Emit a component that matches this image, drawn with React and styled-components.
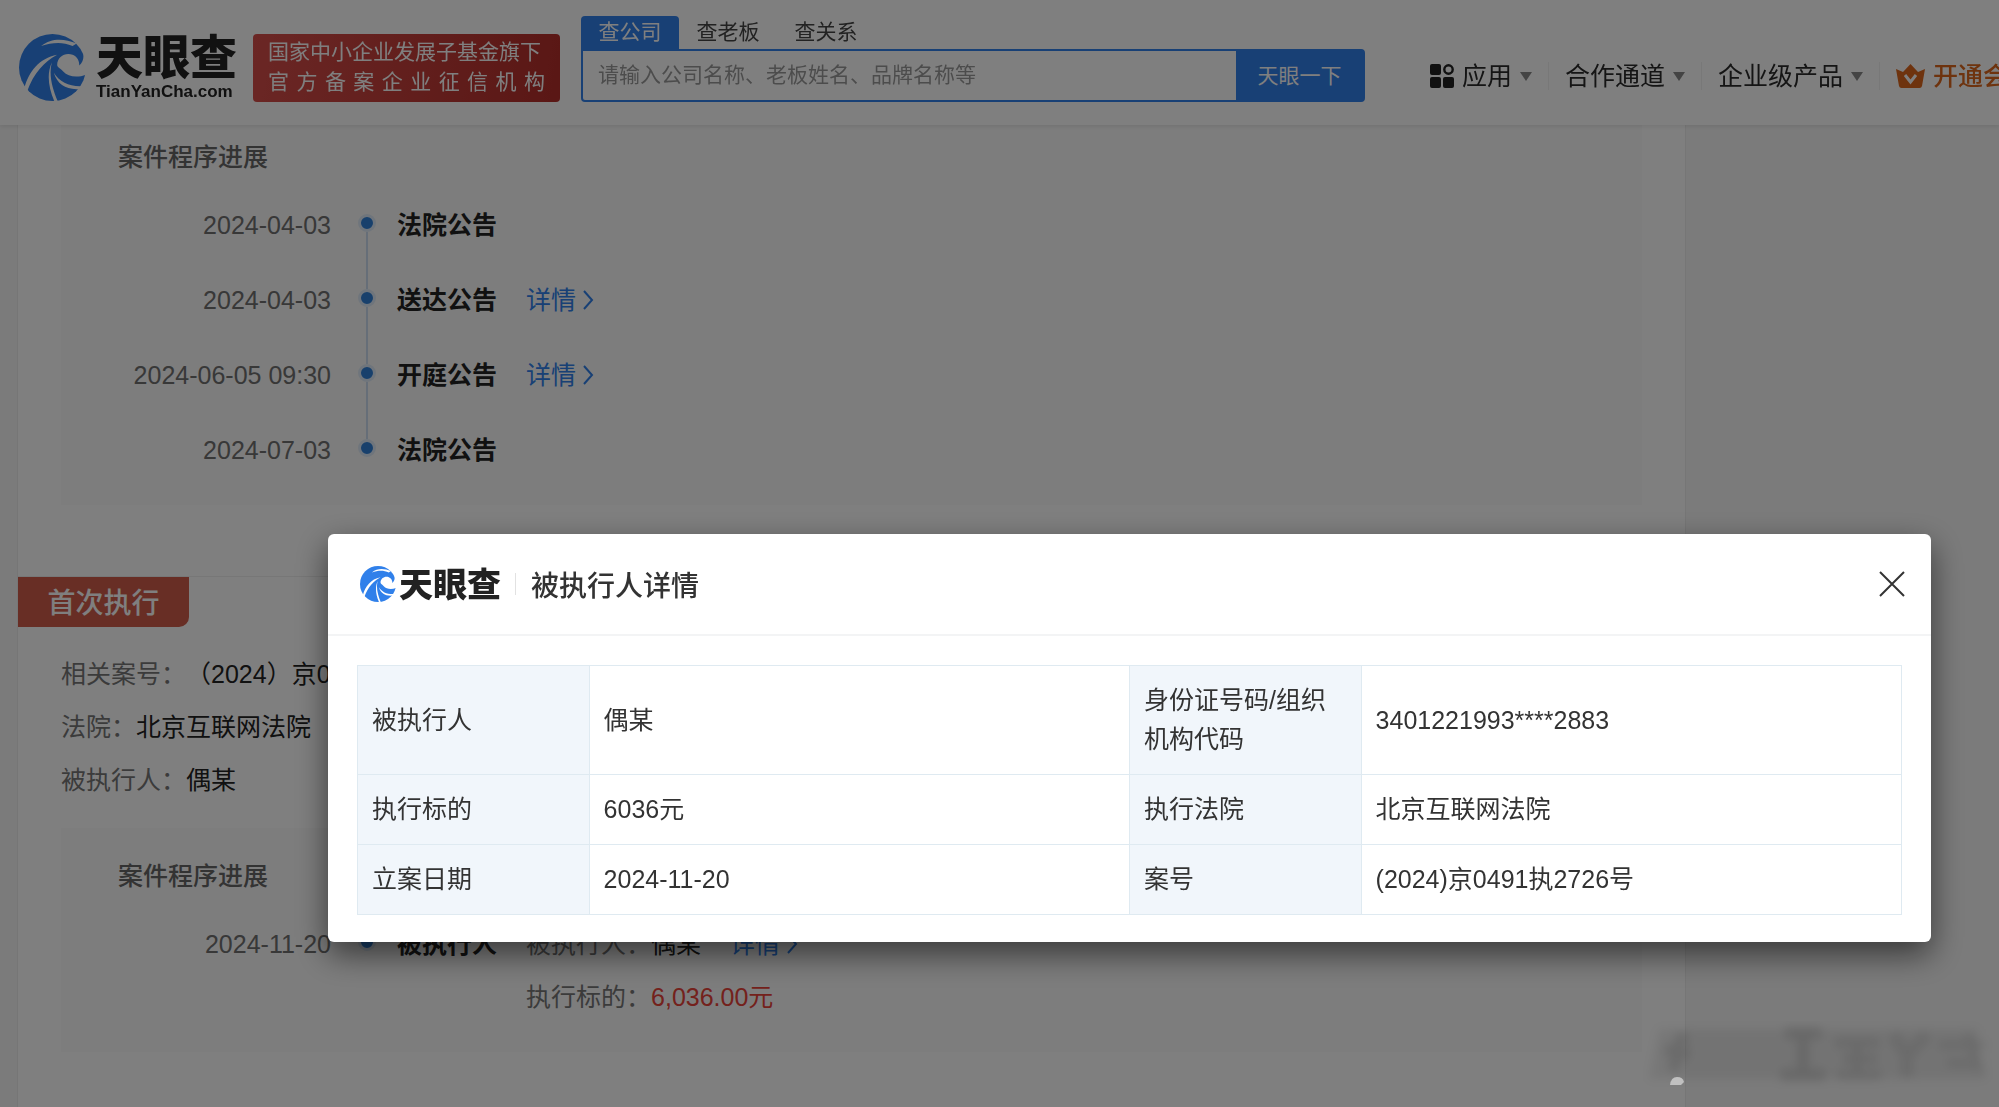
import React from 'react'
import styled, { createGlobalStyle } from 'styled-components'

const GlobalStyle = createGlobalStyle`
  * {
    box-sizing: border-box;
  }

  body {
    margin: 0;
    background: #f6f6f6;
    color: #222222;
    font-family: "Liberation Sans", "Noto Sans CJK SC", sans-serif;
    font-size: 25px;
    line-height: 38px;
    text-spacing-trim: space-all;
    overflow-x: hidden;
  }

  button,
  input {
    font-family: inherit;
  }

  a {
    text-decoration: none;
  }
`

const progressList = [
  { date: '2024-04-03', title: '法院公告' },
  { date: '2024-04-03', title: '送达公告', hasDetail: true },
  { date: '2024-06-05 09:30', title: '开庭公告', hasDetail: true },
  { date: '2024-07-03', title: '法院公告' }
]

const caseInfo = [
  { label: '相关案号：', value: '（2024）京0491执2726号' },
  { label: '法院：', value: '北京互联网法院' },
  { label: '被执行人：', value: '偶某' }
]

const detailRows = [
  ['被执行人', '偶某', '身份证号码/组织机构代码', '3401221993****2883'],
  ['执行标的', '6036元', '执行法院', '北京互联网法院'],
  ['立案日期', '2024-11-20', '案号', '(2024)京0491执2726号']
]

const LogoMark = ({ size }) => (
  <svg width={size} height={size} viewBox="0 0 100 100" aria-hidden="true">
    <circle cx="50" cy="50" r="50" fill="#3080ea" />
    <g fill="#ffffff">
      <path d="M57 46C57 34 69 27 80 31C87 34 90 40 90 47C95 43 97 37 96 28L104 26V59C90 66 74 65 66 56C60 50 57 50 57 46Z" />
      <path d="M33 18C49 5 68 7 86 14L80 18C64 11 49 13 33 18Z" />
      <path d="M8 81C14 57 30 36 57 31C38 41 22 58 12 86Z" />
      <path d="M49 42C44 62 50 82 58 101H53C44 80 41 60 49 42Z" />
      <path d="M52 58C60 72 76 79 94 78L91 82C72 84 57 76 52 58Z" />
    </g>
  </svg>
)

const Chevron = () => (
  <svg width="12" height="20" viewBox="0 0 12 20" fill="none" aria-hidden="true">
    <path d="M2 1L10 10L2 19" stroke="currentColor" strokeWidth="2" />
  </svg>
)

const AppsIcon = () => (
  <svg width="24" height="24" viewBox="0 0 24 24" fill="#222222" aria-hidden="true">
    <rect width="11" height="11" rx="2" />
    <rect y="13" width="11" height="11" rx="2" />
    <rect x="13" y="13" width="11" height="11" rx="2" />
    <circle cx="18.5" cy="5.5" r="4.2" fill="none" stroke="#222222" strokeWidth="2.4" />
  </svg>
)

const CrownIcon = () => (
  <svg width="29" height="24" viewBox="0 0 29 24" aria-hidden="true">
    <path
      d="M0 5L7 8L14.500 0L22 8L29 5L26 22Q25.500 24 23.500 24H5.500Q3.500 24 3 22Z"
      fill="#dc661c"
    />
    <path d="M9 11L14.500 18L20 11" fill="none" stroke="#ffffff" strokeWidth="3" />
  </svg>
)

const Watermark = () => (
  <WatermarkArt viewBox="0 0 350 70" aria-hidden="true">
    <defs>
      <filter id="smudge" x="-10%" y="-20%" width="120%" height="140%">
        <feGaussianBlur stdDeviation="5" />
      </filter>
    </defs>
    <g filter="url(#smudge)" stroke="#000000" fill="none">
      <path d="M16 8H335V58H6Z" fill="#000000" opacity="0.06" stroke="none" />
      <path d="M40 12L30 50M22 28L46 34" strokeWidth="12" opacity="0.1" />
      <path d="M142 12H178M160 12V54M138 54H182" strokeWidth="12" opacity="0.1" />
      <path d="M192 22H236M200 38H234M194 54H238M214 18V56" strokeWidth="9" opacity="0.09" />
      <path d="M250 14L264 34L284 14M264 30V56" strokeWidth="12" opacity="0.08" />
      <path d="M296 24H342M304 42H340M324 14L340 56" strokeWidth="8" opacity="0.08" />
    </g>
    <path d="M27 64Q28 56 34 56Q40 56 41 61L38 64Z" fill="#c0c0c0" />
  </WatermarkArt>
)

const Logo = ({ large }) => (
  <LogoWrapper $large={large}>
    <LogoMark size={large ? 67 : 36} />
    <LogoText $large={large}>
      <LogoName $large={large}>天眼查</LogoName>
      {large && <LogoDomain>TianYanCha.com</LogoDomain>}
    </LogoText>
  </LogoWrapper>
)

const DetailLink = () => (
  <LinkText href="#detail">
    详情
    <Chevron />
  </LinkText>
)

const Header = () => (
  <HeaderBar>
    <Logo large />
    <Slogan>
      <span>国家中小企业发展子基金旗下</span>
      <SloganSpread>官方备案企业征信机构</SloganSpread>
    </Slogan>
    <Search>
      <SearchTabs>
        <SearchTab type="button" $active>查公司</SearchTab>
        <SearchTab type="button">查老板</SearchTab>
        <SearchTab type="button">查关系</SearchTab>
      </SearchTabs>
      <SearchBox>
        <SearchInput
          aria-label="搜索"
          placeholder="请输入公司名称、老板姓名、品牌名称等"
        />
        <SearchButton type="submit">天眼一下</SearchButton>
      </SearchBox>
    </Search>
    <Nav>
      <NavItem href="#apps">
        <AppsIcon />
        应用
        <Caret />
      </NavItem>
      <NavItem href="#cooperation">
        合作通道
        <Caret />
      </NavItem>
      <NavItem href="#products">
        企业级产品
        <Caret />
      </NavItem>
      <NavItem href="#vip" $vip>
        <CrownIcon />
        开通会员
      </NavItem>
    </Nav>
  </HeaderBar>
)

const TimelineRow = ({ date, title, last, children }) => (
  <TimelineItem>
    <TimelineDate>{date}</TimelineDate>
    <TimelineAxis>
      <TimelineDot />
      {!last && <TimelineLine />}
    </TimelineAxis>
    <TimelineContent $last={last}>
      <TimelineTitle>{title}</TimelineTitle>
      {children}
    </TimelineContent>
  </TimelineItem>
)

const DetailModal = () => (
  <Overlay>
    <Modal role="dialog" aria-labelledby="modal-title">
      <ModalHeader>
        <Logo />
        <ModalDivider />
        <ModalTitle id="modal-title">被执行人详情</ModalTitle>
        <CloseButton type="button" aria-label="关闭">
          <svg width="26" height="26" viewBox="0 0 26 26" aria-hidden="true">
            <path d="M1 1L25 25M25 1L1 25" stroke="#333333" strokeWidth="2" />
          </svg>
        </CloseButton>
      </ModalHeader>
      <ModalBody>
        <DetailTable>
          <tbody>
            {detailRows.map(([nameA, valueA, nameB, valueB]) => (
              <tr key={nameA}>
                <th scope="row">{nameA}</th>
                <td>{valueA}</td>
                <th scope="row">{nameB}</th>
                <td>{valueB}</td>
              </tr>
            ))}
          </tbody>
        </DetailTable>
      </ModalBody>
    </Modal>
  </Overlay>
)

const App = () => (
  <>
    <GlobalStyle />
    <Header />
    <Page>
      <Section>
        <ProgressBox>
          <BoxTitle>案件程序进展</BoxTitle>
          <Timeline>
            {progressList.map((item, index) => (
              <TimelineRow
                key={index}
                date={item.date}
                title={item.title}
                last={index === progressList.length - 1}
              >
                {item.hasDetail && <DetailLink />}
              </TimelineRow>
            ))}
          </Timeline>
        </ProgressBox>
      </Section>
      <Section $divided>
        <StageTag>首次执行</StageTag>
        <InfoList>
          {caseInfo.map(({ label, value }) => (
            <div key={label}>
              <Muted>{label}</Muted>
              {value}
            </div>
          ))}
        </InfoList>
        <ProgressBox>
          <BoxTitle>案件程序进展</BoxTitle>
          <Timeline>
            <TimelineRow date="2024-11-20" title="被执行人" last>
              <Facts>
                <Fact>
                  <span>
                    <Muted>被执行人：</Muted>
                    偶某
                  </span>
                  <DetailLink />
                </Fact>
                <Fact>
                  <span>
                    <Muted>执行标的：</Muted>
                    <Amount>6,036.00元</Amount>
                  </span>
                </Fact>
              </Facts>
            </TimelineRow>
          </Timeline>
        </ProgressBox>
      </Section>
    </Page>
    <DetailModal />
    <Watermark />
  </>
)

const HeaderBar = styled.header`
  position: fixed;
  top: 0;
  left: 0;
  right: 0;
  z-index: 10;
  display: flex;
  align-items: flex-end;
  height: 125px;
  padding: 0 0 23px 19px;
  overflow: hidden;
  background: #ffffff;
  box-shadow: 0 2px 4px rgba(0, 0, 0, 0.08);
`

const LogoWrapper = styled.div`
  display: flex;
  align-items: center;
  flex-shrink: 0;
  gap: ${props => (props.$large ? '10px' : '3px')};
`

const LogoText = styled.div`
  display: flex;
  flex-direction: column;
  padding-top: ${props => (props.$large ? '2px' : '1px')};
  color: #222222;
  font-weight: 900;
  white-space: nowrap;
`

const LogoName = styled.span`
  font-size: ${props => (props.$large ? '47px' : '34px')};
  line-height: ${props => (props.$large ? '48px' : '36px')};
`

const LogoDomain = styled.span`
  font-size: 17px;
  line-height: 20px;
`

const Slogan = styled.div`
  display: flex;
  flex-direction: column;
  justify-content: center;
  flex-shrink: 0;
  width: 307px;
  height: 68px;
  margin-left: 16px;
  padding: 0 15px 2px;
  border-radius: 4px;
  background: linear-gradient(100deg, #d64e4a, #b42e2a);
  color: #ffffff;
  font-size: 21px;
  line-height: 30px;
  white-space: nowrap;
`

const SloganSpread = styled.span`
  text-align: justify;
  text-align-last: justify;
`

const Search = styled.div`
  flex-shrink: 0;
  width: 784px;
  margin-left: 21px;
`

const SearchTabs = styled.div`
  display: flex;
`

const SearchTab = styled.button`
  width: 98px;
  height: 33px;
  padding: 0 0 2px;
  border: 0;
  border-radius: 4px 4px 0 0;
  background: ${props => (props.$active ? '#3080ea' : 'transparent')};
  color: ${props => (props.$active ? '#ffffff' : '#444444')};
  font-size: 21px;
  line-height: 31px;
`

const SearchBox = styled.div`
  display: flex;
  height: 53px;
  border: 2px solid #3080ea;
  border-radius: 0 4px 4px 4px;
  background: #ffffff;
`

const SearchInput = styled.input`
  flex: 1;
  min-width: 0;
  padding: 0 15px 2px;
  border: 0;
  background: transparent;
  font-size: 21px;

  &::placeholder {
    color: #999999;
  }
`

const SearchButton = styled.button`
  width: 127px;
  padding: 0 0 4px;
  border: 0;
  background: #3080ea;
  color: #ffffff;
  font-size: 21px;
`

const Nav = styled.nav`
  display: flex;
  flex-shrink: 0;
  align-items: center;
  height: 52px;
  margin-left: 49px;
`

const NavItem = styled.a`
  display: flex;
  align-items: center;
  gap: 8px;
  padding: 0 16px;
  color: ${props => (props.$vip ? '#dc661c' : '#2a2a2a')};
  font-weight: ${props => (props.$vip ? 500 : 400)};
  line-height: 28px;
  white-space: nowrap;

  & + & {
    border-left: 1px solid #f0f0f0;
  }
`

const Caret = styled.span`
  border-top: 9px solid #888888;
  border-left: 6px solid transparent;
  border-right: 6px solid transparent;
`

const Page = styled.main`
  display: flex;
  flex-direction: column;
  min-height: 100vh;
  margin: 0 313px 0 17px;
  padding-top: 109px;
  border: 1px solid #ececec;
  border-width: 0 1px;
  background: #ffffff;
`

const Section = styled.section`
  padding: 0 43px 71px;
  ${props => props.$divided && 'border-top: 1px solid #eeeeee; padding-bottom: 50px;'}
`

const ProgressBox = styled.div`
  padding: 29px 0 36px;
  background: #fafafa;
`

const BoxTitle = styled.h3`
  margin: 0 0 30px;
  padding-left: 57px;
  color: #666666;
  font-size: 25px;
  font-weight: 500;
`

const Timeline = styled.ul`
  margin: 0;
  padding: 0;
  list-style: none;
`

const TimelineItem = styled.li`
  display: grid;
  grid-template-columns: 296px 20px 1fr;
`

const TimelineDate = styled.span`
  padding-right: 26px;
  color: #707070;
  text-align: right;
`

const TimelineAxis = styled.div`
  display: flex;
  flex-direction: column;
  align-items: center;
`

const TimelineDot = styled.span`
  flex-shrink: 0;
  width: 18px;
  height: 18px;
  margin-top: 8px;
  border: 3px solid #dfebf8;
  border-radius: 50%;
  background: #3080d8;
`

const TimelineLine = styled.span`
  flex: 1;
  width: 2px;
  margin-bottom: -8px;
  background: #ccdcf0;
`

const TimelineContent = styled.div`
  display: flex;
  gap: 29px;
  padding: 0 0 ${props => (props.$last ? '0' : '37px')} 20px;
`

const TimelineTitle = styled.strong`
  font-weight: 600;
`

const LinkText = styled.a`
  display: inline-flex;
  align-items: center;
  gap: 6px;
  color: #3080ea;
`

const StageTag = styled.h2`
  width: 171px;
  height: 50px;
  margin: 0 0 28px -43px;
  padding-top: 3px;
  border-radius: 0 0 10px 0;
  background: #d05c4a;
  color: #ffffff;
  font-size: 28px;
  font-weight: 500;
  line-height: 48px;
  text-align: center;
`

const InfoList = styled.div`
  display: flex;
  flex-direction: column;
  gap: 15px;
  margin-bottom: 29px;
`

const Muted = styled.span`
  color: #777777;
`

const Facts = styled.div`
  display: flex;
  flex-direction: column;
  gap: 15px;
`

const Fact = styled.div`
  display: flex;
  gap: 29px;
`

const Amount = styled.span`
  color: #e84238;
`

const Overlay = styled.div`
  position: fixed;
  top: 0;
  right: 0;
  bottom: 0;
  left: 0;
  z-index: 100;
  display: flex;
  align-items: flex-start;
  padding: 534px 68px 0 328px;
  background: rgba(0, 0, 0, 0.5);
`

const Modal = styled.div`
  flex: 1;
  border-radius: 6px;
  background: #ffffff;
  box-shadow: 0 12px 32px rgba(0, 0, 0, 0.55);
`

const ModalHeader = styled.div`
  display: flex;
  align-items: center;
  height: 102px;
  padding: 0 26px 0 32px;
  border-bottom: 2px solid #f3f4f5;
`

const ModalDivider = styled.span`
  width: 1px;
  height: 22px;
  margin: 0 15px 0 14px;
  background: #e2e2e2;
`

const ModalTitle = styled.h1`
  margin: 0 auto 0 0;
  padding-top: 5px;
  color: #333333;
  font-size: 28px;
  font-weight: 500;
  line-height: 38px;
`

const CloseButton = styled.button`
  display: flex;
  padding: 0;
  border: 0;
  background: transparent;
`

const ModalBody = styled.div`
  padding: 29px 29px 27px;
`

const DetailTable = styled.table`
  width: 100%;
  border-collapse: collapse;
  table-layout: fixed;
  color: #333333;
  font-size: 25px;
  line-height: 39px;

  th,
  td {
    padding: 15px 14px;
    border: 1px solid #dfeaf1;
    font-weight: 400;
    text-align: left;
  }

  th {
    width: 15%;
    background: #f1f6fb;
  }

  td {
    width: 35%;
  }
`

const WatermarkArt = styled.svg`
  position: fixed;
  right: 6px;
  bottom: 16px;
  z-index: 110;
  width: 350px;
  height: 70px;
  pointer-events: none;
`

export default App
